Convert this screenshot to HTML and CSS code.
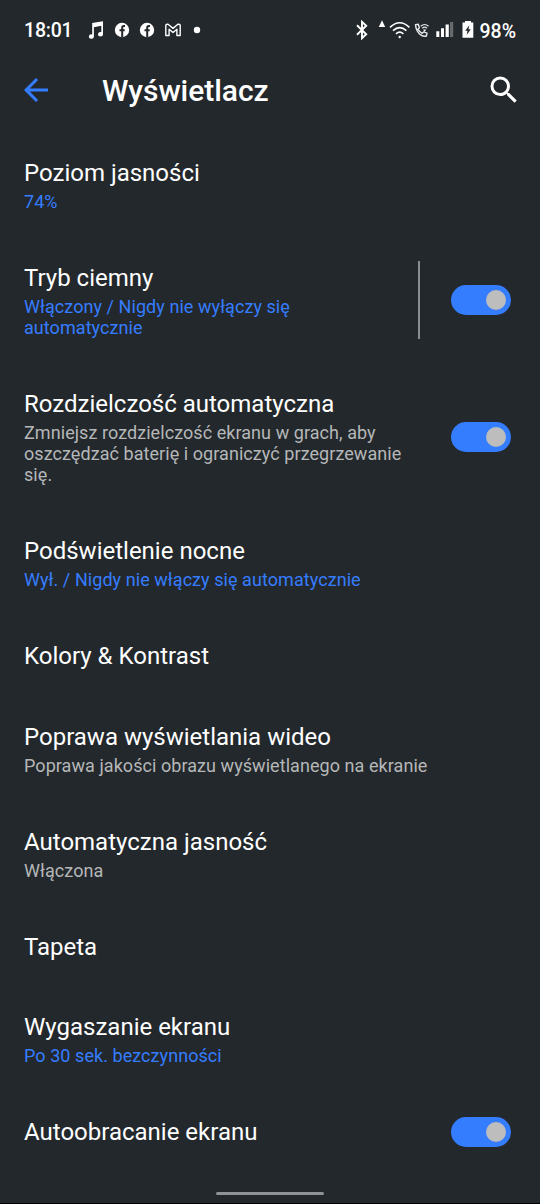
FILE: index.html
```html
<!DOCTYPE html>
<html lang="pl">
<head>
<meta charset="utf-8">
<title>Wyświetlacz</title>
<link rel="stylesheet" href="styles.css">
</head>
<body>
<div class="screen">
  <div class="status">
    <span class="clock">18:01</span>
    <div class="notices">
      <svg width="16" height="20" viewBox="0 0 16 20"><path fill="#fff" d="M4.200 3.100 15 1.200v13a2.500 2.200 0 1 1-1.700-2.100V5.800L5.900 7.200v9.400a2.500 2.200 0 1 1-1.700-2.100z"/></svg>
      <svg width="16" height="20" viewBox="0 0 16 20"><circle cx="8" cy="10" r="7.2" fill="#fff"/><path d="M11 6H9.800Q8.200 6 8.200 7.700v9.500M5.500 10.300h5.200" fill="none" stroke="#23282c" stroke-width="2"/></svg>
      <svg width="16" height="20" viewBox="0 0 16 20"><circle cx="8" cy="10" r="7.2" fill="#fff"/><path d="M11 6H9.800Q8.200 6 8.200 7.700v9.500M5.500 10.300h5.200" fill="none" stroke="#23282c" stroke-width="2"/></svg>
      <svg width="16" height="20" viewBox="0 0 16 20"><path fill="none" stroke="#fff" stroke-width="1.400" stroke-linejoin="round" d="M.8 15.500V5.500Q.8 4.300 2.100 4.300h1L8 8.400l4.900-4.100h1Q15.200 4.300 15.200 5.500v10h-3.300V9.300L8 12.500 4.100 9.300v6.200z"/></svg>
      <svg class="more" width="8" height="20" viewBox="0 0 8 20"><circle cx="4" cy="10" r="3.200" fill="#fff"/></svg>
    </div>
    <div class="system">
      <svg width="14" height="20" viewBox="0 0 14 20"><path fill="none" stroke="#fff" stroke-width="1.900" d="M2 5.300 11.200 14.300 7 18.200V1.800l4.200 3.900L2 14.700"/></svg>
      <svg class="wifi" width="32" height="20" viewBox="0 0 32 20"><path fill="#fff" d="M4 0.200 7.200 7H.8z"/><g fill="none" stroke="#fff" stroke-width="1.600"><path d="M12 7.400Q21.700-1.900 31.400 7.400M15 10.700q6.700-6 13.400 0M18 13.800q3.700-3.200 7.400 0"/></g><circle cx="21.700" cy="17" r="1.200" fill="#fff"/></svg>
      <svg class="call" width="16" height="20" viewBox="0 0 16 20"><g fill="none" stroke="#e6e8e9"><path stroke-width="1.400" stroke-linejoin="round" d="M1.500 4.800 4.300 4.300 5.400 7.700 3.900 9.200Q5.400 12 8.200 13.300L9.800 11.900 13 13.100 12.400 16Q9 17 5.500 13.900T1.500 4.800z"/><path stroke-width="1.200" d="M6.700 6.200q3.900-3.400 7.800 0M8.300 8.200q2.300-2 4.600 0"/></g><path fill="#fff" d="m9 9.600h3.200l-1.600 2.200z"/></svg>
      <svg class="signal" width="18" height="20" viewBox="0 0 18 20"><path fill="#fff" d="M.3 11.200h3V17h-3zM5 8.200h3V17H5zM9.600 4.500h3.200V17H9.600z"/><path fill="#666a6c" d="M14 2h3.200v15H14z"/></svg>
      <svg class="battery" width="12" height="20" viewBox="0 0 12 20"><path fill="#fff" d="M3 1h6v1.500h2.300v15.300H.5V2.500H3z"/><path fill="#23282c" d="M7.300 5.200 3.200 10.800h2.200L4.700 15 8.800 9.200H6.500z"/></svg>
      <span class="percent">98%</span>
    </div>
  </div>
  <header class="bar">
    <svg width="36" height="36" viewBox="0 0 24 24"><path fill="#357dff" d="M20 11H7.830l5.590-5.590L12 4l-8 8 8 8 1.410-1.410L7.830 13H20z"/></svg>
    <h1 class="heading">Wyświetlacz</h1>
    <svg width="36" height="36" viewBox="0 0 24 24"><path fill="#fff" d="M15.500 14h-.79l-.28-.27A6.471 6.471 0 0 0 16 9.500 6.500 6.500 0 1 0 9.500 16c1.610 0 3.090-.59 4.230-1.570l.27.28v.79l5 4.990L20.490 19zm-6 0C7.010 14 5 11.990 5 9.500S7.010 5 9.500 5 14 7.010 14 9.500 11.990 14 9.500 14z"/></svg>
  </header>
  <main class="list">
    <section class="row"><div class="text"><h2 class="title">Poziom jasności</h2><p class="sub accent">74%</p></div></section>
    <section class="row"><div class="text"><h2 class="title">Tryb ciemny</h2><p class="sub accent">Włączony / Nigdy nie wyłączy się<br>automatycznie</p></div><i class="divider"></i><span class="toggle"></span></section>
    <section class="row"><div class="text"><h2 class="title">Rozdzielczość automatyczna</h2><p class="sub">Zmniejsz rozdzielczość ekranu w grach, aby<br>oszczędzać baterię i ograniczyć przegrzewanie<br>się.</p></div><span class="toggle"></span></section>
    <section class="row"><div class="text"><h2 class="title">Podświetlenie nocne</h2><p class="sub accent">Wył. / Nigdy nie włączy się automatycznie</p></div></section>
    <section class="row single"><div class="text"><h2 class="title">Kolory &amp; Kontrast</h2></div></section>
    <section class="row"><div class="text"><h2 class="title">Poprawa wyświetlania wideo</h2><p class="sub">Poprawa jakości obrazu wyświetlanego na ekranie</p></div></section>
    <section class="row"><div class="text"><h2 class="title">Automatyczna jasność</h2><p class="sub">Włączona</p></div></section>
    <section class="row single"><div class="text"><h2 class="title">Tapeta</h2></div></section>
    <section class="row"><div class="text"><h2 class="title">Wygaszanie ekranu</h2><p class="sub accent">Po 30 sek. bezczynności</p></div></section>
    <section class="row single"><div class="text"><h2 class="title">Autoobracanie ekranu</h2></div><span class="toggle"></span></section>
  </main>
  <footer class="nav"><span class="handle"></span></footer>
</div>
</body>
</html>
```
FILE: styles.css
```css
* { box-sizing: border-box; }
body { margin: 0; background: #23282c; color: #fff; font-family: Roboto, "Noto Sans", sans-serif; }
h1, h2, p { margin: 0; }
svg { display: block; flex: none; }
.screen { width: 540px; height: 1204px; display: flex; flex-direction: column; overflow: hidden; border-bottom: 1px solid #000; }
.status { height: 60px; padding: 0 24px; display: flex; align-items: center; font-size: 20px; font-weight: 500; line-height: 24px; flex: none; }
.clock { width: 49px; padding-top: 2px; white-space: nowrap; font-size: 19.500px; letter-spacing: -.2px; }
.notices { display: flex; gap: 9.600px; margin-left: 15px; }
.more { margin-left: 3px; }
.system { display: flex; align-items: center; margin-left: auto; }
.wifi { margin-left: 9.500px; }
.call { margin-left: 4px; }
.signal { margin-left: 6px; }
.battery { margin-left: 8px; }
.percent { margin-left: 5px; padding-top: 2px; margin-bottom: -1px; font-size: 19.500px; }
.bar { height: 72px; padding: 12px 18px 24px; display: flex; align-items: center; flex: none; }
.heading { flex: 1; margin-left: 48px; padding-top: 2px; font-size: 30px; line-height: 36px; font-weight: 500; letter-spacing: -.05px; }
.list { flex: none; }
.row { display: flex; align-items: center; padding: 27px 29px 26px 24px; white-space: nowrap; }
.single { padding-bottom: 25.500px; }
.text { flex: 1; }
.title { font-size: 24px; line-height: 28px; font-weight: 400; }
.sub { margin: 4px 0 -1px; font-size: 18px; line-height: 21px; letter-spacing: .06px; color: #b5b7b8; }
.accent { color: #357dff; }
.divider { width: 2px; height: 78px; margin: -3px 31px -2px 0; background: #8b8e90; }
.toggle { width: 60px; height: 30px; margin: -1.500px 0 -.500px; padding: 5px; border-radius: 15px; background: #357dff; display: flex; justify-content: flex-end; }
.toggle::after { content: ""; width: 20px; height: 20px; border-radius: 50%; background: #bdbdbd; }
.nav { margin-top: auto; height: 11px; display: flex; justify-content: center; flex: none; }
.handle { width: 108px; height: 3px; border-radius: 2px; background: #909395; }
```
